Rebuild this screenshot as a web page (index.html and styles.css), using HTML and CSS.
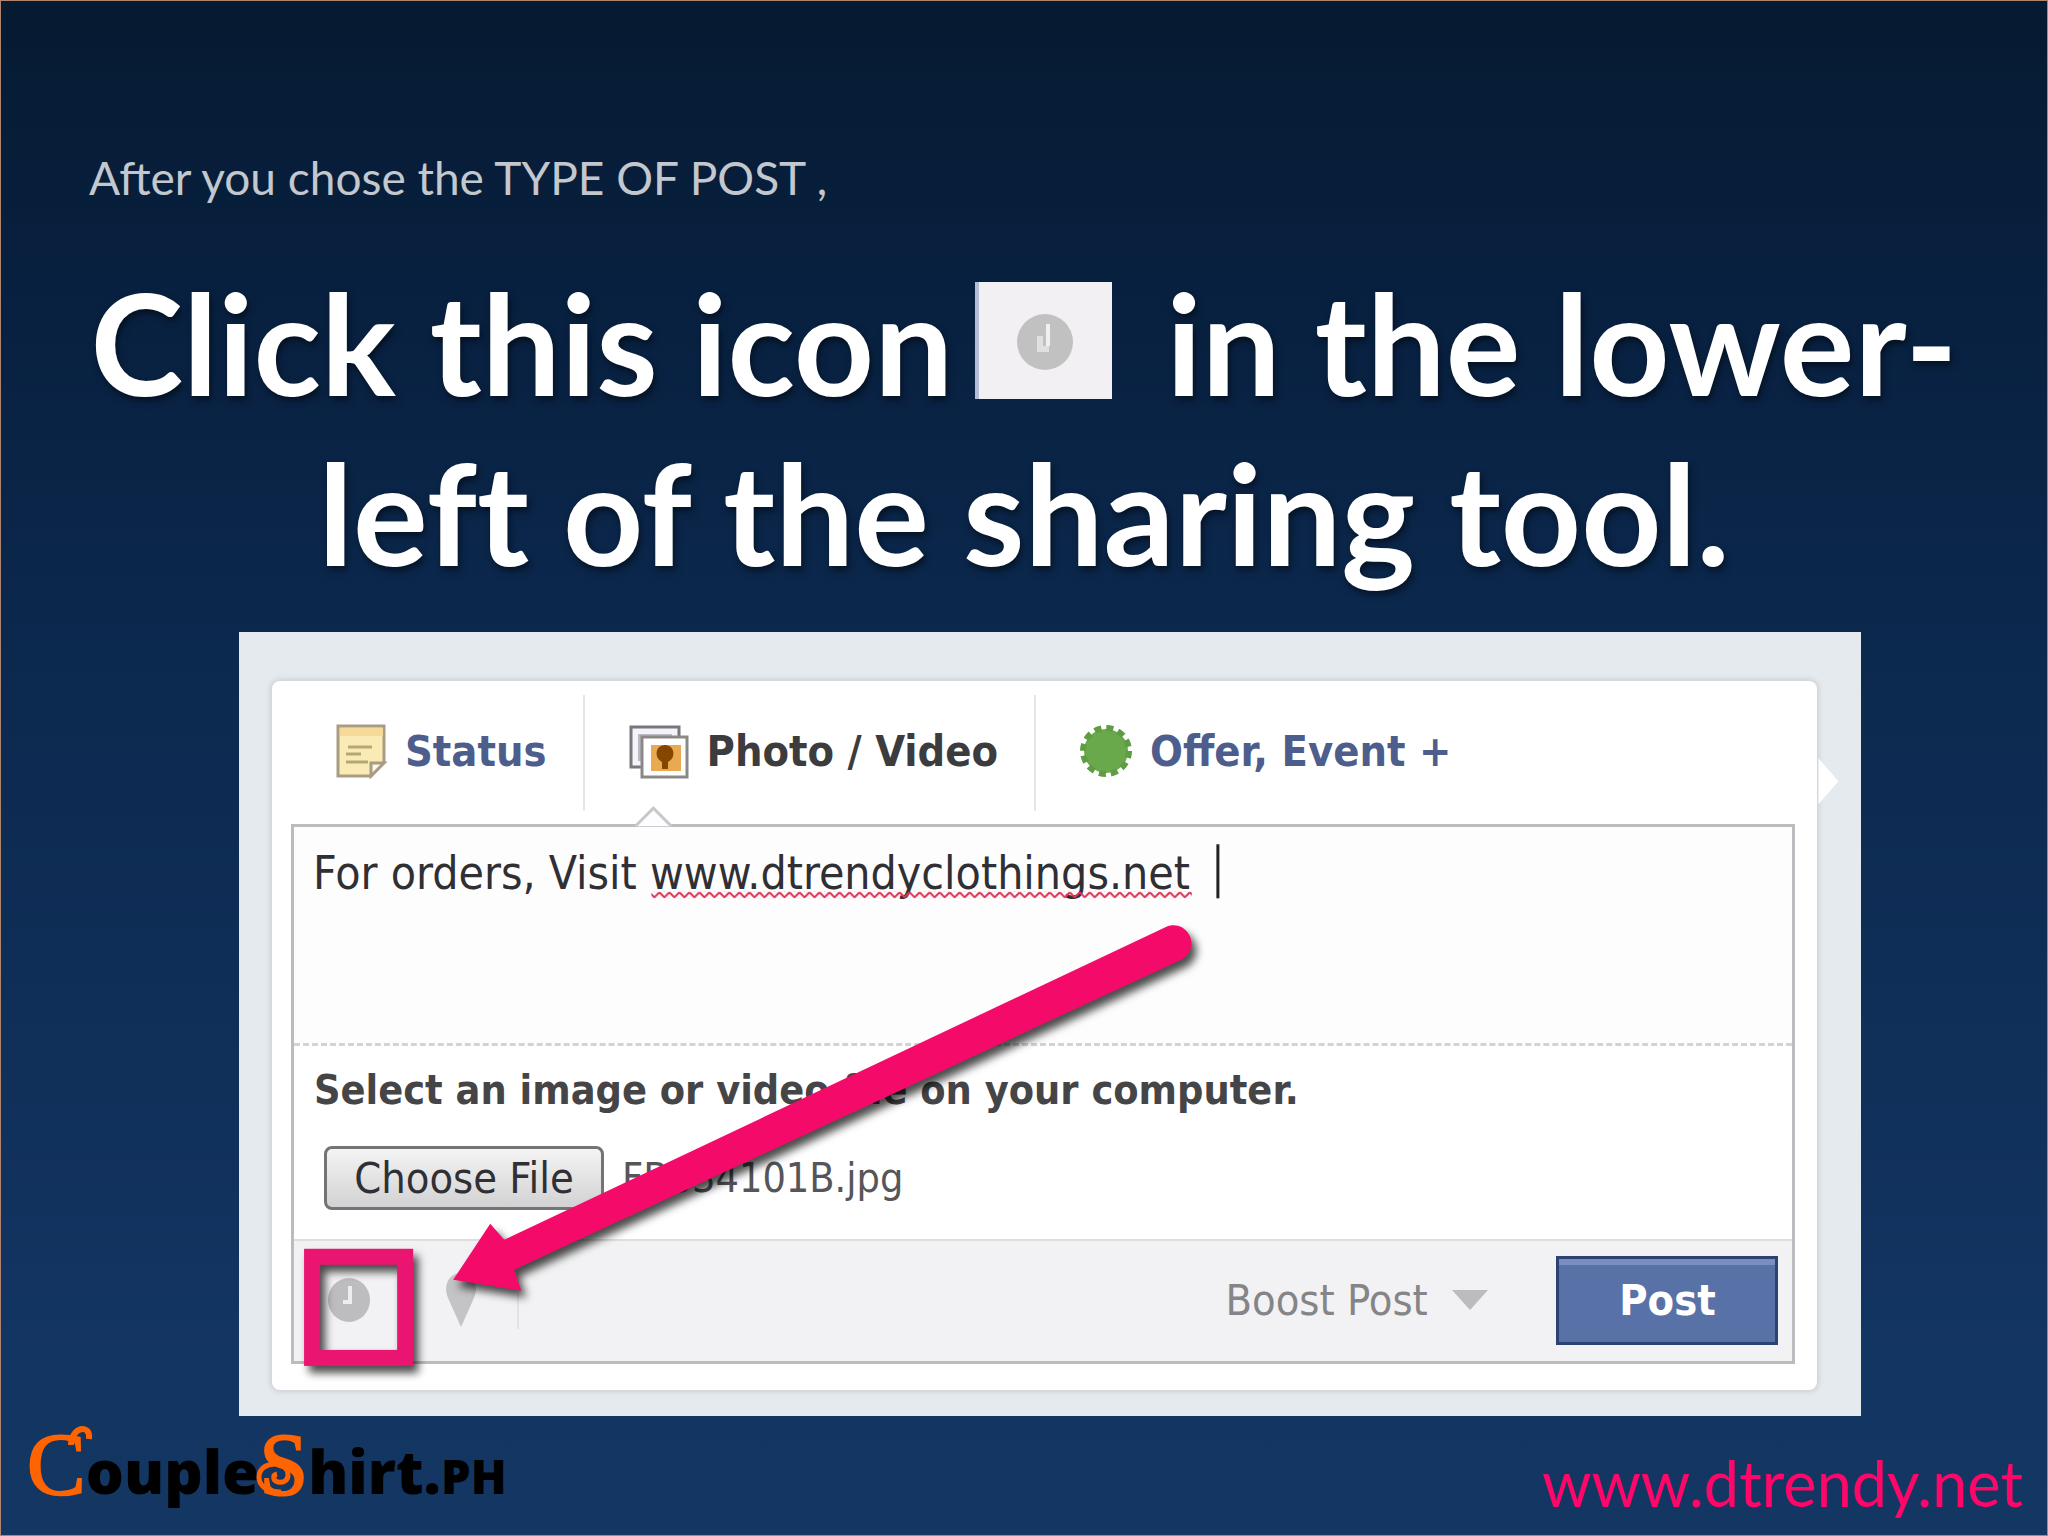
FILE: index.html
```html
<!DOCTYPE html>
<html lang="en">
<head>
  <meta charset="UTF-8">
  <meta name="viewport" content="width=device-width, initial-scale=1">
  <title>Schedule a post</title>
  <link rel="stylesheet" href="styles.css">
</head>
<body>

  <main class="slide">
    <p class="intro">After you chose the TYPE OF POST ,</p>

    <h1 class="title">Click this icon
      <svg class="title-icon" viewBox="0 0 137 117" aria-hidden="true">
        <rect width="137" height="117" fill="#f2f0f2"/>
        <rect width="4" height="117" fill="#b3bdd6"/>
        <circle cx="70" cy="60" r="28" fill="#c2c1c2"/>
        <path d="M73 42v22" fill="none" stroke="#f0f0f0" stroke-width="4"/>
        <path d="M62 54h6v10h6v6H62z" fill="#e0e0e0"/>
      </svg>
      in the lower-<br>left of the sharing tool.</h1>

    <div class="photo">
      <form class="composer">
        <div class="tabs">
          <button type="button" class="tab">
            <svg class="tab-icon" viewBox="0 0 52 56" aria-hidden="true">
              <path d="M3 3h46v36L36 53H3z" fill="#faeab4" stroke="#a99c84" stroke-width="3"/>
              <path d="M5 5h43v8H5z" fill="#f7d99a"/>
              <path d="M13 24h24M11 31h15M11 39h22" stroke="#b5a777" stroke-width="3"/>
              <path d="M36 53V40h13z" fill="#fff8e2" stroke="#a99c84" stroke-width="3"/>
            </svg>
            Status
          </button>
          <button type="button" class="tab active">
            <svg class="tab-icon wide" viewBox="0 0 60 56" aria-hidden="true">
              <path d="M2 4h48v40H2z" fill="#f3f3f8" stroke="#77777c" stroke-width="3"/>
              <path d="M9 11h34v27H9z" fill="#b9bac6"/>
              <path d="M13 14h45v40H13z" fill="#fff" stroke="#8b8987" stroke-width="3"/>
              <path d="M22 22h30v26H22z" fill="#e9a951"/>
              <path d="M33 46v-7c-9-5-6-17 3-17s12 12 3 17v7z" fill="#854600"/>
            </svg>
            Photo / Video
          </button>
          <button type="button" class="tab">
            <svg class="tab-icon" viewBox="0 0 52 56" aria-hidden="true">
              <circle cx="26" cy="28" r="22" fill="#69a84b"/>
              <circle cx="26" cy="28" r="23" fill="none" stroke="#5f9c44" stroke-width="6" stroke-dasharray="7 5"/>
            </svg>
            Offer, Event +
          </button>
        </div>

        <div class="box">
          <textarea class="message" aria-label="Message" spellcheck="false">For orders, Visit www.dtrendyclothings.net</textarea>

          <div class="upload">
            <p class="upload-label">Select an image or video file on your computer.</p>
            <div class="file">
              <button type="button" class="choose">Choose File</button>
              <span>FB834101B.jpg</span>
            </div>
          </div>

          <div class="bar">
            <button type="button" class="tool" aria-label="Schedule">
              <svg width="44" height="46" viewBox="0 0 44 46">
                <ellipse cx="22" cy="23" rx="21" ry="22" fill="#bdbdbf"/>
                <path d="M23 9v16h-7" fill="none" stroke="#ededed" stroke-width="4"/>
              </svg>
            </button>
            <button type="button" class="tool pin" aria-label="Location">
              <svg width="32" height="58" viewBox="0 0 32 58">
                <path d="M16 56L3 27C-3 12 6 2 16 2s19 10 13 25z" fill="#c4c4c6"/>
              </svg>
            </button>
            <div class="boost">
              <select class="boost-select" aria-label="Boost">
                <option>Boost Post</option>
              </select>
              <svg width="36" height="20" viewBox="0 0 36 20" aria-hidden="true">
                <path d="M0 0h36L18 20z" fill="#bcbcbe"/>
              </svg>
            </div>
            <button type="submit" class="post">Post</button>
          </div>
        </div>
      </form>

      <!-- pointer, spelling underline and callout drawn over the form -->
      <svg class="marks" viewBox="0 0 1621 783" preserveAspectRatio="none" aria-hidden="true">
        <defs>
          <pattern id="wave" width="10" height="7" patternUnits="userSpaceOnUse">
            <path d="M0 1l5 5 5-5" fill="none" stroke="#dd3557" stroke-width="2"/>
          </pattern>
        </defs>
        <path d="M396 194l18-18 18 18" fill="#fdfcfe" stroke="#c9c7cb" stroke-width="3"/>
        <path d="M1578 126l20 23-20 23z" fill="#fff"/>
        <path d="M978 212v54" stroke="#222" stroke-width="3"/>
        <rect x="412" y="259" width="540" height="7" fill="url(#wave)"/>
        <g class="pink">
          <path d="M214 647l37-56 14 16L925 295a18 18 0 0 1 17 32L275 637l7 21z" fill="#f40a68"/>
          <rect x="73" y="624" width="93" height="101" fill="none" stroke="#e91571" stroke-width="16"/>
        </g>
      </svg>
    </div>

    <footer class="foot">
      <a class="logo" href="#"><span class="cap">C</span>ouple<span class="cap">S</span>hirt.<span class="ph">PH</span>
        <svg class="curls" viewBox="0 0 300 100" aria-hidden="true">
          <path d="M44 38c0-18 20-22 18-6" fill="none" stroke="#ff6400" stroke-width="6"/>
          <path d="M254 85c-14 0-22-6-22-15s8-13 16-13 13 5 13 11-5 8-10 7-6-7-1-8" fill="none" stroke="#ff6400" stroke-width="5"/>
        </svg>
      </a>
      <a class="site" href="#">www.dtrendy.net</a>
    </footer>
  </main>

</body>
</html>
```
FILE: styles.css
```css
* {
  box-sizing: border-box;
}

body {
  margin: 0;
  font-family: Lato, sans-serif;
}

.slide {
  min-height: 100vh;
  display: flex;
  flex-direction: column;
  border: 1px solid #b0856f;
  background: linear-gradient(#061a31, #08203f 18%, #0c294f 45%, #133562 88%, #143663);
}

.intro {
  margin: 149px 0 0 88px;
  font-size: 46px;
  line-height: 56px;
  color: #c3c7ce;
}

.title {
  margin: 51px 0 35px;
  text-align: center;
  font-size: 140px;
  line-height: 170px;
  font-weight: 700;
  font-variant-ligatures: none;
  color: #fff;
  text-shadow: 2px 4px 7px rgba(0,0,0,0.5);
}

.title-icon {
  width: 137px;
  height: 117px;
  margin: 0 20px 0 -12px;
  vertical-align: -3px;
}

.photo {
  position: relative;
  width: 79.3%;
  margin-left: 238px;
  padding: 49px 44px 26px 33px;
  background: #e4eaee;
}

.composer {
  padding: 0 22px 26px 19px;
  background: #fff;
  border-radius: 8px;
  box-shadow: 0 0 5px 2px #cdd0d6;
}

.tabs {
  height: 143px;
  display: flex;
  align-items: center;
}

button, select, textarea {
  font-family: "DejaVu Sans Condensed", "DejaVu Sans", sans-serif;
  font-size: 43px;
}

.tab {
  display: flex;
  align-items: center;
  gap: 18px;
  height: 116px;
  padding: 0 36px 4px 44px;
  border: 0;
  border-right: 2px solid #e6e6ea;
  background: none;
  font-weight: 700;
  color: #4d5d8c;
}

.tab:last-child {
  border-right: 0;
}

.tab.active {
  color: #3c3c3e;
}

.tab-icon {
  width: 52px;
  height: 56px;
  overflow: visible;
}

.tab-icon.wide {
  width: 60px;
}

.box {
  border: 3px solid #bcbbbf;
}

.message {
  display: block;
  width: 100%;
  height: 216px;
  padding: 19px;
  border: 0;
  resize: none;
  background: #fefdfe;
  color: #303034;
  font-size: 46px;
  line-height: 54px;
}

.upload {
  height: 196px;
  padding: 18px 20px;
  border-top: 3px dashed #d3d2d4;
  font-family: "DejaVu Sans Condensed", "DejaVu Sans", sans-serif;
  font-size: 41px;
}

.upload-label {
  margin: 0 0 30px;
  line-height: 52px;
  font-weight: 700;
  color: #454547;
}

.file {
  display: flex;
  align-items: center;
  gap: 18px;
  padding-left: 10px;
  color: #55555a;
}

.choose {
  width: 280px;
  height: 64px;
  padding: 0;
  border: 3px solid #747476;
  border-radius: 8px;
  background: linear-gradient(#f4f4f4, #d2d2d4);
  color: #303034;
}

.bar {
  display: flex;
  align-items: center;
  height: 122px;
  padding: 0 14px 2px 33px;
  border-top: 2px solid #dededf;
  background: #f2f1f3;
}

.tool {
  display: flex;
  padding: 0;
  border: 0;
  background: none;
}

.pin {
  margin-left: 74px;
  padding-right: 40px;
  border-right: 2px solid #e2e2e4;
}

.boost {
  display: flex;
  align-items: center;
  gap: 24px;
  margin-left: auto;
  margin-right: 68px;
}

.boost-select {
  appearance: none;
  padding: 0;
  border: 0;
  background: none;
  color: #858588;
}

.post {
  width: 222px;
  height: 89px;
  border: 3px solid #2c4272;
  background: #5872a8;
  box-shadow: inset 0 6px #7a8fc0;
  color: #fff;
  font-weight: 700;
}

.marks {
  position: absolute;
  inset: 0;
  width: 100%;
  height: 100%;
  pointer-events: none;
}

.pink {
  filter: drop-shadow(5px 7px 4px rgba(0,0,0,0.7));
}

.foot {
  flex: 1;
  display: flex;
  align-items: center;
  justify-content: space-between;
  padding: 0 24px 0 26px;
}

.foot a {
  text-decoration: none;
}

.logo {
  position: relative;
  padding-bottom: 10px;
  font-family: "Open Sans", sans-serif;
  font-size: 60px;
  font-weight: 800;
  line-height: 80px;
  color: #000;
}

.cap {
  font-family: "Liberation Serif", serif;
  font-size: 88px;
  font-weight: 400;
  color: #ff6400;
  -webkit-text-stroke: 2px #ff6400;
}

.ph {
  font-size: 47px;
}

.curls {
  position: absolute;
  left: 0;
  top: -18px;
  width: 300px;
  height: 100px;
}

.site {
  padding-top: 14px;
  font-size: 63px;
  color: #ff0668;
}
```
